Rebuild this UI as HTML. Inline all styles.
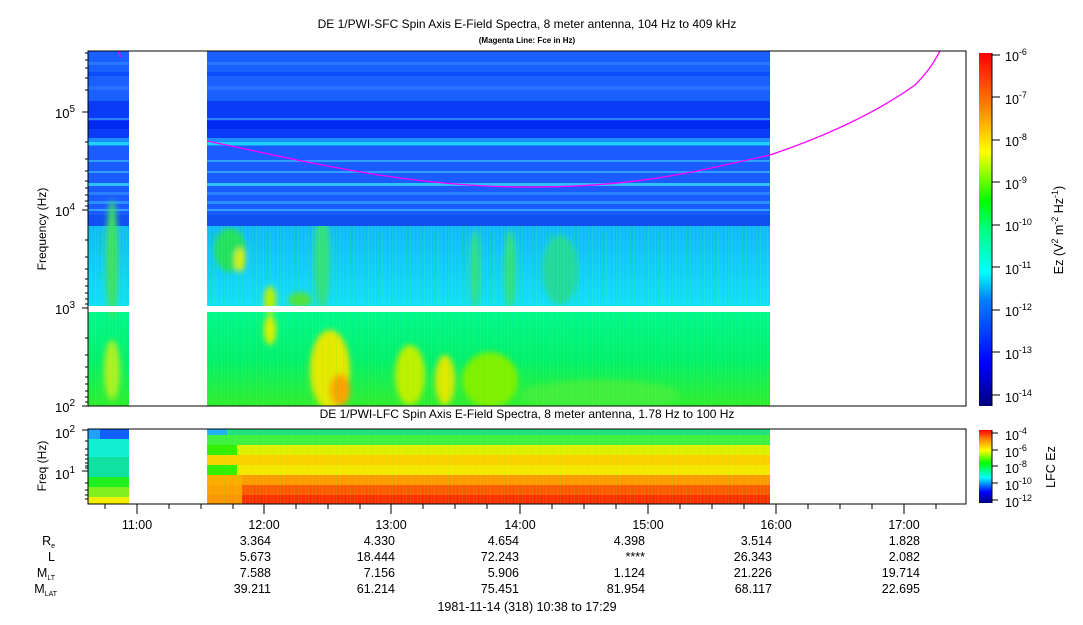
<!DOCTYPE html>
<html><head><meta charset="utf-8"><style>
body{margin:0;background:#fff;width:1083px;height:620px;overflow:hidden;font-family:"Liberation Sans",sans-serif;}
svg text{font-family:"Liberation Sans",sans-serif;fill:#000}
</style></head><body>
<svg width="1083" height="620" viewBox="0 0 1083 620" xmlns="http://www.w3.org/2000/svg">
<defs>
<linearGradient id="cb1" x1="0" y1="1" x2="0" y2="0">
<stop offset="0" stop-color="#00007f"/><stop offset="0.12" stop-color="#0000ff"/><stop offset="0.3" stop-color="#0080ff"/><stop offset="0.38" stop-color="#00ffff"/><stop offset="0.5" stop-color="#00ff80"/><stop offset="0.58" stop-color="#00ff00"/><stop offset="0.72" stop-color="#ffff00"/><stop offset="0.85" stop-color="#ff8000"/><stop offset="1" stop-color="#ff0000"/>
</linearGradient>
<linearGradient id="cb2" x1="0" y1="1" x2="0" y2="0">
<stop offset="0" stop-color="#00007f"/><stop offset="0.15" stop-color="#0000ff"/><stop offset="0.35" stop-color="#00ffff"/><stop offset="0.55" stop-color="#00ff00"/><stop offset="0.72" stop-color="#ffff00"/><stop offset="0.88" stop-color="#ff8000"/><stop offset="1" stop-color="#ff0000"/>
</linearGradient>
<linearGradient id="grn" x1="0" y1="0" x2="0" y2="1">
<stop offset="0" stop-color="#00f890"/><stop offset="0.5" stop-color="#00f070"/><stop offset="1" stop-color="#30ee30"/>
</linearGradient>
<linearGradient id="cyn" x1="0" y1="0" x2="0" y2="1">
<stop offset="0" stop-color="#10b8ff"/><stop offset="1" stop-color="#10e0ff"/>
</linearGradient>
<filter id="bl"><feGaussianBlur stdDeviation="3"/></filter>
<pattern id="vn" width="7" height="10" patternUnits="userSpaceOnUse"><rect x="0" width="1" height="10" fill="#40ff40" opacity=".5"/><rect x="4" width="1" height="10" fill="#a0ff20" opacity=".4"/></pattern>
<clipPath id="c2"><rect x="207" y="226" width="563" height="80"/><rect x="207" y="312" width="563" height="94"/><rect x="88" y="180" width="41" height="126"/><rect x="88" y="312" width="41" height="94"/></clipPath>
</defs>

<text x="527" y="28" font-size="12" text-anchor="middle">DE 1/PWI-SFC  Spin Axis E-Field Spectra, 8 meter antenna, 104 Hz to 409 kHz</text>
<text x="527" y="43" font-size="8" text-anchor="middle" font-weight="bold">(Magenta Line: Fce in Hz)</text>

<!-- top spectrogram -->
<g transform="translate(88,0)">
<rect x="0" y="51" width="682" height="50" fill="#1a60ff"/>
<rect x="0" y="62" width="682" height="3" fill="#2a78ff"/>
<rect x="0" y="72" width="682" height="4" fill="#0a4cff"/>
<rect x="0" y="86" width="682" height="4" fill="#2a70ff"/>
<rect x="0" y="101" width="682" height="37" fill="#0a3cf8"/>
<rect x="0" y="118" width="682" height="2" fill="#2a80ff"/>
<rect x="0" y="121" width="682" height="8" fill="#0028f0"/>
<rect x="0" y="138" width="682" height="8" fill="#1a90ff"/>
<rect x="0" y="142" width="682" height="3" fill="#20d0ff"/>
<rect x="0" y="146" width="682" height="80" fill="#1a5cff"/>
<rect x="0" y="160" width="682" height="2" fill="#30a0ff"/>
<rect x="0" y="171" width="682" height="2" fill="#30a0ff"/>
<rect x="0" y="183" width="682" height="3" fill="#30c0ff"/>
<rect x="0" y="192" width="682" height="3" fill="#2a80ff"/>
<rect x="0" y="201" width="682" height="3" fill="#2a90ff"/>
<rect x="0" y="209" width="682" height="2" fill="#30a0ff"/>
<rect x="0" y="215" width="682" height="11" fill="#1050f0"/>
<rect x="0" y="226" width="682" height="80" fill="url(#cyn)"/>
<rect x="0" y="312" width="682" height="94" fill="url(#grn)"/>
</g>
<!-- features -->
<g clip-path="url(#c2)">
<g filter="url(#bl)">
<ellipse cx="230" cy="250" rx="16" ry="22" fill="#20e060"/>
<ellipse cx="240" cy="260" rx="5" ry="12" fill="#e0f000"/>
<ellipse cx="270" cy="300" rx="6" ry="14" fill="#c0f000"/>
<ellipse cx="300" cy="300" rx="12" ry="8" fill="#50e040"/>
<ellipse cx="322" cy="260" rx="8" ry="50" fill="#30e080"/>
<ellipse cx="330" cy="370" rx="20" ry="40" fill="#e8e800"/>
<ellipse cx="340" cy="390" rx="10" ry="16" fill="#ffa000"/>
<ellipse cx="270" cy="330" rx="6" ry="15" fill="#e0f000"/>
<ellipse cx="410" cy="375" rx="15" ry="30" fill="#c0f000"/>
<ellipse cx="445" cy="380" rx="10" ry="25" fill="#e0e800"/>
<ellipse cx="490" cy="380" rx="28" ry="28" fill="#80f000"/>
<ellipse cx="475" cy="270" rx="5" ry="40" fill="#30e080"/>
<ellipse cx="510" cy="270" rx="6" ry="40" fill="#30e080"/>
<ellipse cx="560" cy="270" rx="18" ry="35" fill="#20d8a0"/>
<ellipse cx="600" cy="395" rx="80" ry="15" fill="#40ee40"/>
<ellipse cx="112" cy="260" rx="6" ry="60" fill="#40e060"/>
<ellipse cx="112" cy="370" rx="8" ry="30" fill="#b0f020"/>
</g>
<rect x="88" y="226" width="682" height="180" fill="url(#vn)" opacity=".35"/>
</g>
<rect x="129" y="51" width="78" height="355" fill="#fff"/>
<rect x="88" y="306" width="682" height="6" fill="#fff"/>
<path d="M207,141 C300,160 400,186 520,187 C640,188 700,170 770,155 C830,135 880,110 915,85 C930,70 935,60 940,51" fill="none" stroke="#ff00ff" stroke-width="1.3"/>
<path d="M118,51 L121,57" stroke="#ff00ff" stroke-width="1.3"/>
<rect x="88" y="51" width="878" height="355" fill="none" stroke="#000"/>
<!-- left axis -->
<g font-size="13">
<text x="55" y="118">10<tspan font-size="10" dy="-6">5</tspan></text>
<text x="55" y="216">10<tspan font-size="10" dy="-6">4</tspan></text>
<text x="55" y="314">10<tspan font-size="10" dy="-6">3</tspan></text>
<text x="55" y="412">10<tspan font-size="10" dy="-6">2</tspan></text>
<text transform="translate(46,229) rotate(-90)" text-anchor="middle" font-size="12">Frequency (Hz)</text>
</g>
<path d="M82,112h6M82,210h6M82,308h6M82,406h6M85,53h3M85,60h3M85,68h3M85,78h3M85,90h3M85,142h3M85,159h3M85,171h3M85,181h3M85,188h3M85,195h3M85,201h3M85,206h3M85,240h3M85,257h3M85,269h3M85,279h3M85,286h3M85,293h3M85,299h3M85,304h3M85,338h3M85,355h3M85,367h3M85,377h3M85,384h3M85,391h3M85,397h3M85,402h3" stroke="#000"/>

<!-- LFC -->
<text x="527" y="418" font-size="12" text-anchor="middle">DE 1/PWI-LFC  Spin Axis E-Field Spectra, 8 meter antenna, 1.78 Hz to 100 Hz</text>
<g>
<rect x="88" y="429" width="41" height="10" fill="#20a0ff"/><rect x="100" y="429" width="29" height="10" fill="#1060ff"/>
<rect x="88" y="439" width="41" height="18" fill="#10f0d0"/>
<rect x="88" y="457" width="41" height="20" fill="#10e0a0"/>
<rect x="88" y="477" width="41" height="10" fill="#20f020"/>
<rect x="88" y="487" width="41" height="10" fill="#80f020"/>
<rect x="88" y="497" width="41" height="7" fill="#f0f000"/>
<rect x="207" y="429" width="563" height="6" fill="#20e080"/>
<rect x="207" y="429" width="20" height="6" fill="#20b0ff"/>
<rect x="207" y="435" width="563" height="10" fill="#40f040"/>
<rect x="207" y="445" width="563" height="10" fill="#e0f000"/>
<rect x="207" y="445" width="30" height="10" fill="#30f000"/>
<rect x="207" y="455" width="563" height="10" fill="#ffd000"/>
<rect x="207" y="465" width="563" height="10" fill="#f8e800"/>
<rect x="207" y="465" width="30" height="10" fill="#30f000"/>
<rect x="207" y="475" width="563" height="10" fill="#ff9a00"/>
<rect x="207" y="485" width="563" height="10" fill="#ff5a00"/>
<rect x="207" y="495" width="563" height="9" fill="#ff3000"/>
<rect x="207" y="475" width="35" height="29" fill="#ffb000" opacity=".8"/>
<rect x="207" y="429" width="563" height="75" fill="url(#vn)" opacity=".25"/>
</g>
<rect x="88" y="429" width="878" height="75" fill="none" stroke="#000"/>
<g font-size="13">
<text x="55" y="438">10<tspan font-size="10" dy="-6">2</tspan></text>
<text x="55" y="479">10<tspan font-size="10" dy="-6">1</tspan></text>
<text transform="translate(46,466) rotate(-90)" text-anchor="middle" font-size="12">Freq (Hz)</text>
</g>
<path d="M82,430h6M82,471h6M85,441h3M85,449h3M85,455h3M85,459h3M85,463h3M85,466h3M85,468h3M85,483h3M85,490h3M85,495h3M85,499h3" stroke="#000"/>
<!-- time ticks -->
<path d="M137,504v10M264,504v10M391,504v10M520,504v10M648,504v10M776,504v10M904,504v10M105,504v5M169,504v5M201,504v5M233,504v5M296,504v5M328,504v5M360,504v5M423,504v5M455,504v5M487,504v5M552,504v5M584,504v5M616,504v5M680,504v5M712,504v5M744,504v5M808,504v5M840,504v5M872,504v5M936,504v5" stroke="#000"/>
<g font-size="12.5" text-anchor="middle">
<text x="137" y="529">11:00</text><text x="264" y="529">12:00</text><text x="391" y="529">13:00</text><text x="520" y="529">14:00</text><text x="648" y="529">15:00</text><text x="776" y="529">16:00</text><text x="904" y="529">17:00</text>
</g>
<g font-size="12.5" text-anchor="end">
<text x="55" y="545">R<tspan font-size="7" dy="3">e</tspan></text>
<text x="55" y="561">L</text>
<text x="55" y="577">M<tspan font-size="7" dy="3">LT</tspan></text>
<text x="57" y="593">M<tspan font-size="7" dy="3">LAT</tspan></text>
<text x="271" y="545">3.364</text><text x="395" y="545">4.330</text><text x="519" y="545">4.654</text><text x="645" y="545">4.398</text><text x="772" y="545">3.514</text><text x="920" y="545">1.828</text>
<text x="271" y="561">5.673</text><text x="395" y="561">18.444</text><text x="519" y="561">72.243</text><text x="645" y="561">****</text><text x="772" y="561">26.343</text><text x="920" y="561">2.082</text>
<text x="271" y="577">7.588</text><text x="395" y="577">7.156</text><text x="519" y="577">5.906</text><text x="645" y="577">1.124</text><text x="772" y="577">21.226</text><text x="920" y="577">19.714</text>
<text x="271" y="593">39.211</text><text x="395" y="593">61.214</text><text x="519" y="593">75.451</text><text x="645" y="593">81.954</text><text x="772" y="593">68.117</text><text x="920" y="593">22.695</text>
</g>
<text x="527" y="611" font-size="12.5" text-anchor="middle">1981-11-14 (318) 10:38 to 17:29</text>

<!-- colorbars -->
<rect x="979" y="53" width="13" height="353" fill="url(#cb1)"/>
<path d="M992,53v353M992,55h8M992,97h8M992,140h8M992,182h8M992,225h8M992,267h8M992,310h8M992,352h8M992,395h8" stroke="#000"/>
<g font-size="12.5">
<text x="1005" y="61">10<tspan font-size="9" dy="-6">-6</tspan></text>
<text x="1005" y="104">10<tspan font-size="9" dy="-6">-7</tspan></text>
<text x="1005" y="146">10<tspan font-size="9" dy="-6">-8</tspan></text>
<text x="1005" y="189">10<tspan font-size="9" dy="-6">-9</tspan></text>
<text x="1005" y="231">10<tspan font-size="9" dy="-6">-10</tspan></text>
<text x="1005" y="274">10<tspan font-size="9" dy="-6">-11</tspan></text>
<text x="1005" y="316">10<tspan font-size="9" dy="-6">-12</tspan></text>
<text x="1005" y="359">10<tspan font-size="9" dy="-6">-13</tspan></text>
<text x="1005" y="402">10<tspan font-size="9" dy="-6">-14</tspan></text>
<text transform="translate(1063,230) rotate(-90)" text-anchor="middle">Ez (V<tspan font-size="9" dy="-5">2</tspan><tspan dy="5"> m</tspan><tspan font-size="9" dy="-5">-2</tspan><tspan dy="5"> Hz</tspan><tspan font-size="9" dy="-5">-1</tspan><tspan dy="5">)</tspan></text>
</g>
<rect x="979" y="430" width="13" height="73" fill="url(#cb2)"/>
<path d="M992,430v73M992,433h6M992,450h6M992,466h6M992,483h6M992,500h6" stroke="#000"/>
<g font-size="12.5">
<text x="1005" y="440">10<tspan font-size="9" dy="-6">-4</tspan></text>
<text x="1005" y="457">10<tspan font-size="9" dy="-6">-6</tspan></text>
<text x="1005" y="473">10<tspan font-size="9" dy="-6">-8</tspan></text>
<text x="1005" y="490">10<tspan font-size="9" dy="-6">-10</tspan></text>
<text x="1005" y="507">10<tspan font-size="9" dy="-6">-12</tspan></text>
<text transform="translate(1055,467) rotate(-90)" text-anchor="middle">LFC Ez</text>
</g>
</svg>
</body></html>
